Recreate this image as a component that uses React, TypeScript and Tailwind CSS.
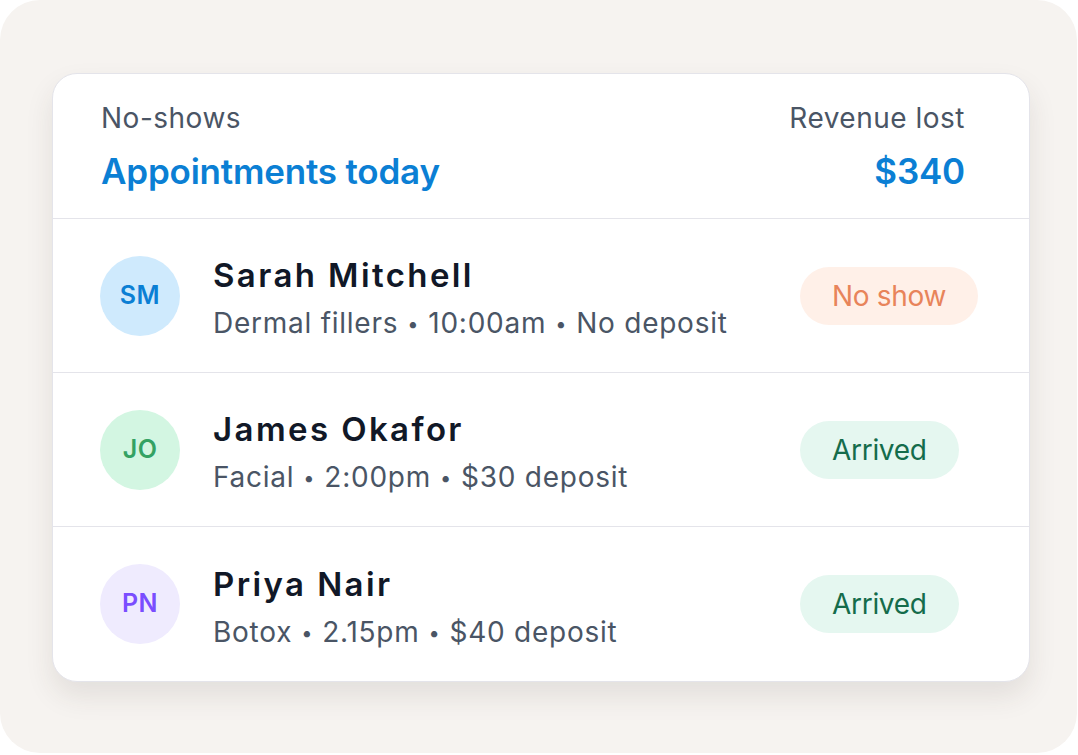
import React from "react";

const rows = [
  {
    initials: "SM",
    name: "Sarah Mitchell",
    sub: ["Dermal fillers", "10:00am", "No deposit"],
    avatar: "bg-[#cfeafd] text-[#0b7fd4]",
    badge: "No show",
    badgeCls: "bg-[#fff0e8] text-[#e8845a]",
  },
  {
    initials: "JO",
    name: "James Okafor",
    sub: ["Facial", "2:00pm", "$30 deposit"],
    avatar: "bg-[#d3f6e2] text-[#34a263]",
    badge: "Arrived",
    badgeCls: "bg-[#e5f7f0] text-[#146c4b]",
  },
  {
    initials: "PN",
    name: "Priya Nair",
    sub: ["Botox", "2.15pm", "$40 deposit"],
    avatar: "bg-[#efebfe] text-[#7a4dff]",
    badge: "Arrived",
    badgeCls: "bg-[#e5f7f0] text-[#146c4b]",
  },
];

export default function App() {
  return (
    <div className="w-[1078px] h-[755px] bg-white" style={{ fontFamily: "Inter, 'Noto Sans', sans-serif" }}>
      <div className="w-[1077px] h-[753px] rounded-[40px] bg-[#f6f3f0] pl-[52px] pt-[73px]">
        <div className="w-[978px] rounded-[25px] bg-white border border-[#e4e4ea] shadow-[0_14px_28px_rgba(60,50,40,0.10)] overflow-hidden">
          <div className="pl-12 pr-16 pt-[26px] pb-[26px] border-b border-[#e4e4ea] flex flex-col gap-[14px]">
            <div className="flex justify-between text-[28px] leading-[36px] text-[#4a5565] tracking-[0.5px]">
              <span>No-shows</span>
              <span>Revenue lost</span>
            </div>
            <div className="flex justify-between text-[35px] leading-[42px] font-semibold text-[#0b7fd4] tracking-[-0.2px]">
              <span>Appointments today</span>
              <span>$340</span>
            </div>
          </div>
          <div className="divide-y divide-[#e4e4ea]">
            {rows.map((r) => (
              <div key={r.name} className="h-[154px] pl-[47px] pr-[49px] flex items-center">
                <div className={`w-20 h-20 shrink-0 rounded-full flex items-center justify-center text-[25px] font-semibold tracking-[0.5px] ${r.avatar}`}>
                  {r.initials}
                </div>
                <div className="ml-[33px] mt-[6px] flex flex-col gap-[10px] flex-1 min-w-0">
                  <div className="text-[33px] leading-[40px] font-semibold text-[#111827] tracking-[2.4px] whitespace-nowrap">{r.name}</div>
                  <div className="text-[28px] leading-[36px] text-[#4a5565] tracking-[0.75px] whitespace-nowrap">
                    {r.sub.map((s, i) => (
                      <React.Fragment key={i}>
                        {i > 0 && <span className="px-[9px] text-[20px] align-[2px]">•</span>}
                        {s}
                      </React.Fragment>
                    ))}
                  </div>
                </div>
                <div className="w-[180px] shrink-0 flex">
                  <div className={`h-[58px] px-[32px] shrink-0 whitespace-nowrap rounded-full flex items-center text-[28px] tracking-[-0.3px] ${r.badgeCls}`}>
                    {r.badge}
                  </div>
                </div>
              </div>
            ))}
          </div>
        </div>
      </div>
    </div>
  );
}
